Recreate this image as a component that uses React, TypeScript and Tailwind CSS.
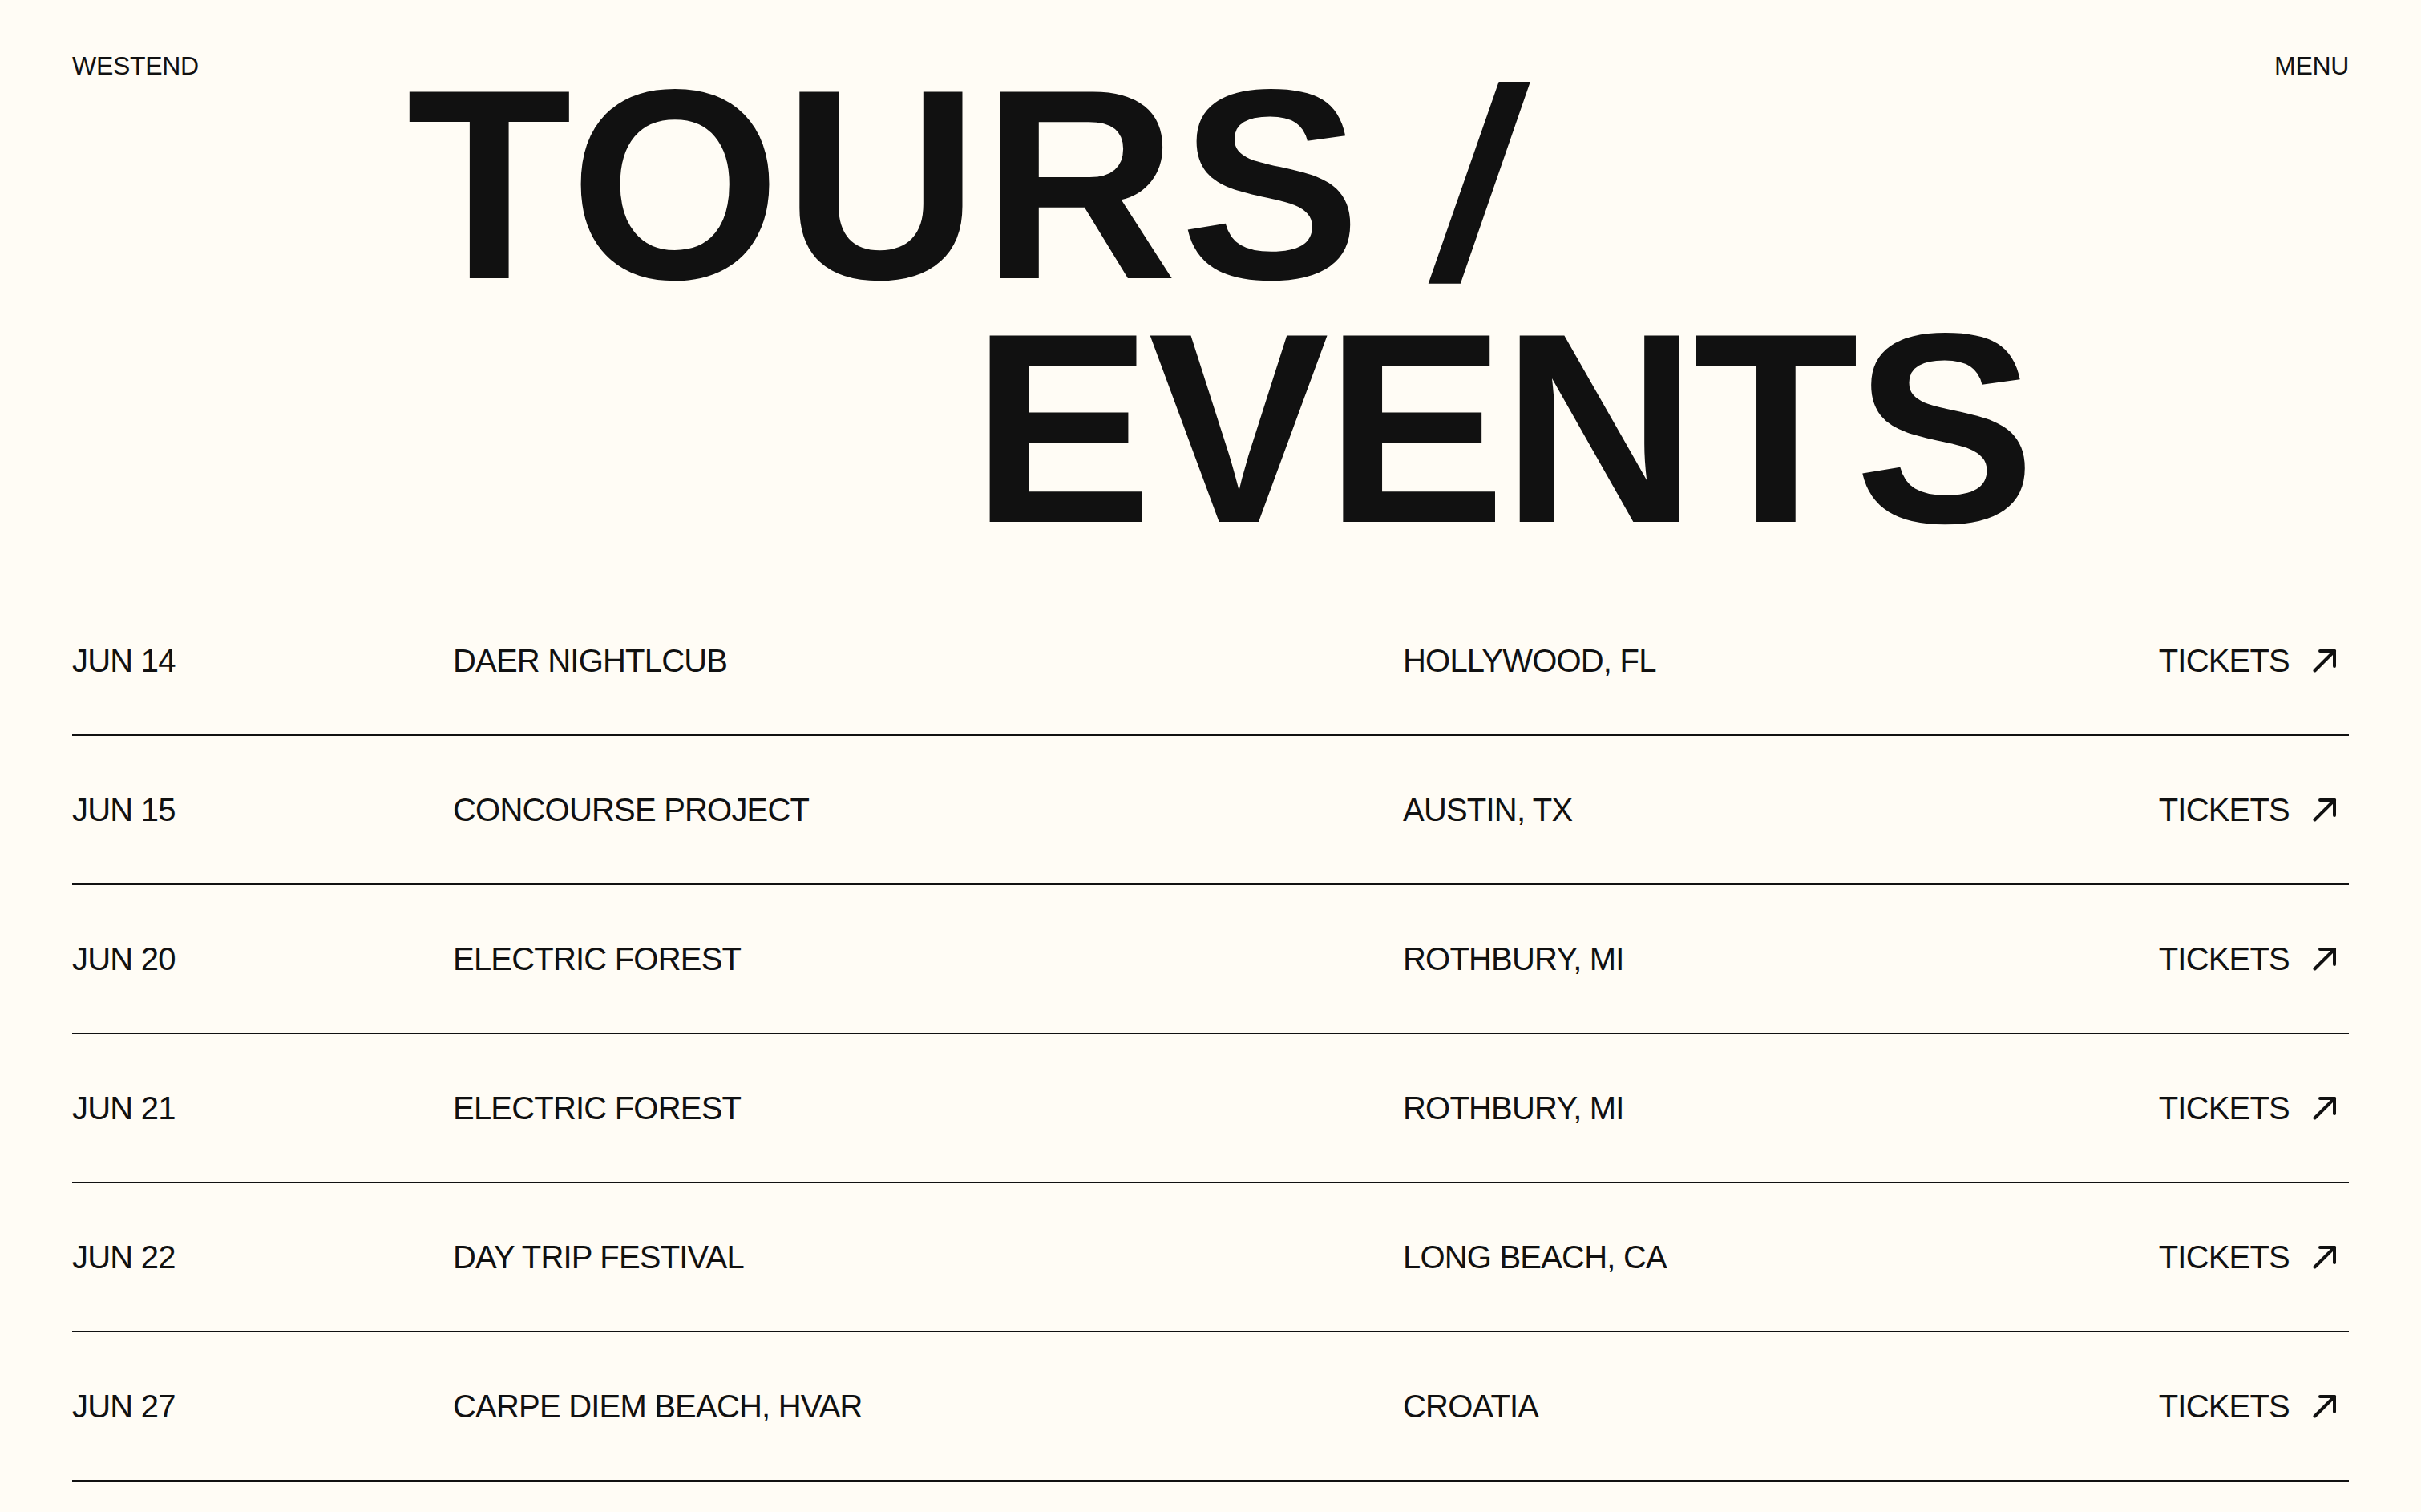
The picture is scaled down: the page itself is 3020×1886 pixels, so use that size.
const events = [
  { date: "JUN 14", name: "DAER NIGHTLCUB", place: "HOLLYWOOD, FL" },
  { date: "JUN 15", name: "CONCOURSE PROJECT", place: "AUSTIN, TX" },
  { date: "JUN 20", name: "ELECTRIC FOREST", place: "ROTHBURY, MI" },
  { date: "JUN 21", name: "ELECTRIC FOREST", place: "ROTHBURY, MI" },
  { date: "JUN 22", name: "DAY TRIP FESTIVAL", place: "LONG BEACH, CA" },
  { date: "JUN 27", name: "CARPE DIEM BEACH, HVAR", place: "CROATIA" },
];

function ArrowUpRight() {
  return (
    <svg width="30" height="30" viewBox="0 0 30 30" fill="none" className="shrink-0">
      <path d="M2.5 27.5 27 3" stroke="#111111" strokeWidth="4" strokeLinecap="round" />
      <path d="M9 3h18v19" stroke="#111111" strokeWidth="4" strokeLinecap="round" strokeLinejoin="round" />
    </svg>
  );
}

export default function App() {
  return (
    <main className="min-h-[1886px] bg-[#fffcf5] px-[90px] pt-[66px] pb-[40px] font-['Liberation_Sans',Arial,sans-serif] text-[#111111]">
      <header className="flex items-start">
        <a href="#" className="w-[200px] shrink-0 text-[32px] leading-none tracking-[-0.01em]">
          WESTEND
        </a>
        <h1 className="mt-[12px] flex-1 text-[338px] font-bold leading-[0.9]">
          <span className="block pl-[217px] tracking-[0.01em]">
            TOURS <span className="inline-block -skew-x-[9deg]">/</span>
          </span>
          <span className="block pl-[922px] tracking-[-0.015em]">EVENTS</span>
        </h1>
        <button className="shrink-0 text-[32px] leading-none tracking-[-0.01em]">MENU</button>
      </header>

      <ul className="mt-[46px]">
        {events.map((e) => (
          <li
            key={e.date}
            className="grid h-[186px] grid-cols-[475px_1185px_1fr_auto] items-center border-b-2 border-[#111111] text-[40px] leading-none tracking-[-0.02em]"
          >
            <span>{e.date}</span>
            <span>{e.name}</span>
            <span>{e.place}</span>
            <a href="#" className="flex items-center gap-[29px] pr-[15px]">
              TICKETS
              <ArrowUpRight />
            </a>
          </li>
        ))}
      </ul>
    </main>
  );
}
